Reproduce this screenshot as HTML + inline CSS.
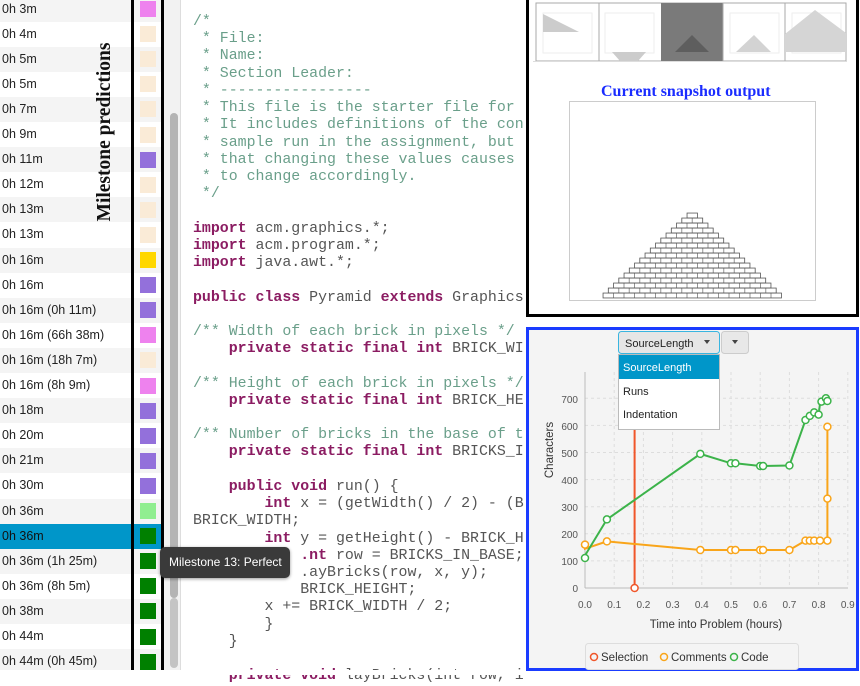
<!DOCTYPE html>
<html><head><meta charset="utf-8"><style>
*{margin:0;padding:0;box-sizing:border-box}
body{width:860px;height:675px;background:#fff;position:relative;overflow:hidden;font-family:"Liberation Sans",sans-serif}
.row{position:absolute;left:0;width:163px;height:25.1px;font-size:12.5px;color:#222;line-height:25px;padding-left:2px}
.sw{position:absolute;left:140px;width:16px;height:16px;top:4.5px}
.code{position:absolute;left:193px;top:14px;font-family:"Liberation Mono",monospace;font-size:14.9px;line-height:17.22px;color:#555;white-space:pre}
.c{color:#6a9f8a}.k{color:#8b1c62;font-weight:bold}
</style></head><body>
<div style="position:absolute;left:163px;top:0;width:17px;height:672px;background:#f2f2f2"></div>
<div style="position:absolute;left:170px;top:113px;width:8px;height:485px;background:#b4b4b4;border-radius:4px"></div>
<div style="position:absolute;left:170px;top:598px;width:8px;height:70px;background:#c4c4c4;border-radius:4px"></div>
<div style="position:absolute;left:180px;top:0;width:1px;height:672px;background:#ddd"></div>

<div id="list">
<div class="row" style="top:-3.5px;background:#f4f4f4">0h 3m<div class="sw" style="background:#ee82ee"></div></div>
<div class="row" style="top:21.6px">0h 4m<div class="sw" style="background:#faebd7"></div></div>
<div class="row" style="top:46.7px;background:#f4f4f4">0h 5m<div class="sw" style="background:#faebd7"></div></div>
<div class="row" style="top:71.8px">0h 5m<div class="sw" style="background:#faebd7"></div></div>
<div class="row" style="top:96.9px;background:#f4f4f4">0h 7m<div class="sw" style="background:#faebd7"></div></div>
<div class="row" style="top:122px">0h 9m<div class="sw" style="background:#faebd7"></div></div>
<div class="row" style="top:147.1px;background:#f4f4f4">0h 11m<div class="sw" style="background:#9370db"></div></div>
<div class="row" style="top:172.2px">0h 12m<div class="sw" style="background:#faebd7"></div></div>
<div class="row" style="top:197.3px;background:#f4f4f4">0h 13m<div class="sw" style="background:#faebd7"></div></div>
<div class="row" style="top:222.4px">0h 13m<div class="sw" style="background:#faebd7"></div></div>
<div class="row" style="top:247.5px;background:#f4f4f4">0h 16m<div class="sw" style="background:#ffd700"></div></div>
<div class="row" style="top:272.6px">0h 16m<div class="sw" style="background:#9370db"></div></div>
<div class="row" style="top:297.7px;background:#f4f4f4">0h 16m (0h 11m)<div class="sw" style="background:#9370db"></div></div>
<div class="row" style="top:322.8px">0h 16m (66h 38m)<div class="sw" style="background:#ee82ee"></div></div>
<div class="row" style="top:347.9px;background:#f4f4f4">0h 16m (18h 7m)<div class="sw" style="background:#faebd7"></div></div>
<div class="row" style="top:373px">0h 16m (8h 9m)<div class="sw" style="background:#ee82ee"></div></div>
<div class="row" style="top:398.1px;background:#f4f4f4">0h 18m<div class="sw" style="background:#9370db"></div></div>
<div class="row" style="top:423.2px">0h 20m<div class="sw" style="background:#9370db"></div></div>
<div class="row" style="top:448.3px;background:#f4f4f4">0h 21m<div class="sw" style="background:#9370db"></div></div>
<div class="row" style="top:473.4px">0h 30m<div class="sw" style="background:#9370db"></div></div>
<div class="row" style="top:498.5px;background:#f4f4f4">0h 36m<div class="sw" style="background:#90ee90"></div></div>
<div class="row" style="top:523.6px;background:#0096c9;color:#111">0h 36m<div class="sw" style="background:#008000"></div></div>
<div class="row" style="top:548.7px;background:#f4f4f4">0h 36m (1h 25m)<div class="sw" style="background:#008000"></div></div>
<div class="row" style="top:573.8px">0h 36m (8h 5m)<div class="sw" style="background:#008000"></div></div>
<div class="row" style="top:598.9px;background:#f4f4f4">0h 38m<div class="sw" style="background:#008000"></div></div>
<div class="row" style="top:624px">0h 44m<div class="sw" style="background:#008000"></div></div>
<div class="row" style="top:649.1px;background:#f4f4f4">0h 44m (0h 45m)<div class="sw" style="background:#008000"></div></div>
</div>
<div style="position:absolute;left:131px;top:-4px;width:33px;height:677px;border:3px solid #000"></div>
<div style="position:absolute;left:105px;top:132px;transform:translate(-50%,-50%) rotate(-90deg);font-family:'Liberation Serif',serif;font-weight:bold;font-size:19.5px;white-space:nowrap;color:#111">Milestone predictions</div>

<div class="code"><span class="c">/*
 * File:
 * Name:
 * Section Leader: 
 * -----------------
 * This file is the starter file for
 * It includes definitions of the con
 * sample run in the assignment, but
 * that changing these values causes
 * to change accordingly.
 */</span>

<span class="k">import</span> acm.graphics.*;
<span class="k">import</span> acm.program.*;
<span class="k">import</span> java.awt.*;

<span class="k">public class</span> Pyramid <span class="k">extends</span> Graphics

<span class="c">/** Width of each brick in pixels */</span>
    <span class="k">private static final int</span> BRICK_WI

<span class="c">/** Height of each brick in pixels */</span>
    <span class="k">private static final int</span> BRICK_HE

<span class="c">/** Number of bricks in the base of t</span>
    <span class="k">private static final int</span> BRICKS_I

    <span class="k">public void</span> run() {
        <span class="k">int</span> x = (getWidth() / 2) - (B
BRICK_WIDTH;
        <span class="k">int</span> y = getHeight() - BRICK_H
            <span class="k">.nt</span> row = BRICKS_IN_BASE;
            .ayBricks(row, x, y);
            BRICK_HEIGHT;
        x += BRICK_WIDTH / 2;
        }
    }

    <span class="k">private void</span> layBricks(int row, i</div>

<div style="position:absolute;left:160px;top:547px;width:130px;height:31px;background:#3a3a3a;border-radius:5px;color:#fff;font-size:12px;line-height:31px;padding-left:9px;box-shadow:0 1px 3px rgba(0,0,0,.4)">Milestone 13: Perfect</div>

<!-- top right -->
<div style="position:absolute;left:526px;top:-3px;width:333px;height:320px;border:3px solid #000;background:#fff"></div>
<div style="position:absolute;left:601px;top:92px;transform:translateY(-50%);font-family:'Liberation Serif',serif;font-weight:bold;font-size:16px;color:#1a2cff">Current snapshot output</div>
<div style="position:absolute;left:0;top:670px;width:860px;height:5px;background:#fff"></div>
<svg style="position:absolute;left:0;top:0" width="860" height="675">
<defs>
<pattern id="A" x="603" y="3" width="10.5" height="5" patternUnits="userSpaceOnUse"><rect x="0" y="0" width="10.5" height="5" fill="#fff" stroke="#666" stroke-width="0.7"/></pattern>
<pattern id="B" x="608.25" y="3" width="10.5" height="5" patternUnits="userSpaceOnUse"><rect x="0" y="0" width="10.5" height="5" fill="#fff" stroke="#666" stroke-width="0.7"/></pattern>
</defs>
<rect x="536" y="3" width="310" height="58" fill="#fff" stroke="#aaa"/>
<rect x="661" y="3" width="62" height="58" fill="#7a7a7a"/>
<g stroke="#aaa"><line x1="599" y1="3" x2="599" y2="61"/><line x1="723" y1="3" x2="723" y2="61"/><line x1="785" y1="3" x2="785" y2="61"/></g>
<g fill="none" stroke="#eee"><rect x="543" y="13" width="49" height="40"/><rect x="605" y="13" width="49" height="40"/><rect x="730" y="13" width="49" height="40"/><rect x="792" y="13" width="49" height="40"/></g>
<polygon points="543,14 579,32 543,32" fill="#ccc"/>
<polygon points="612,52 646,52 638,61 620,61" fill="#ccc"/>
<polygon points="675,52 709,52 692,35" fill="#5e5e5e"/>
<polygon points="736,52 771,52 754,35" fill="#d3d3d3"/>
<polygon points="785,52 846,52 846,33 815,10 785,34" fill="#d5d5d5"/>
<rect x="533" y="61" width="314" height="1" fill="#ddd"/>
<rect x="569.5" y="101.5" width="246" height="199" fill="#fff" stroke="#ccc"/>
<g stroke="#555" stroke-width="0.7">
<rect x="603" y="293" width="178.5" height="5" fill="url(#A)"/>
<rect x="608.25" y="288" width="168" height="5" fill="url(#B)"/>
<rect x="613.5" y="283" width="157.5" height="5" fill="url(#A)"/>
<rect x="618.75" y="278" width="147" height="5" fill="url(#B)"/>
<rect x="624" y="273" width="136.5" height="5" fill="url(#A)"/>
<rect x="629.25" y="268" width="126" height="5" fill="url(#B)"/>
<rect x="634.5" y="263" width="115.5" height="5" fill="url(#A)"/>
<rect x="639.75" y="258" width="105" height="5" fill="url(#B)"/>
<rect x="645" y="253" width="94.5" height="5" fill="url(#A)"/>
<rect x="650.25" y="248" width="84" height="5" fill="url(#B)"/>
<rect x="655.5" y="243" width="73.5" height="5" fill="url(#A)"/>
<rect x="660.75" y="238" width="63" height="5" fill="url(#B)"/>
<rect x="666" y="233" width="52.5" height="5" fill="url(#A)"/>
<rect x="671.25" y="228" width="42" height="5" fill="url(#B)"/>
<rect x="676.5" y="223" width="31.5" height="5" fill="url(#A)"/>
<rect x="681.75" y="218" width="21" height="5" fill="url(#B)"/>
<rect x="687" y="213" width="10.5" height="5" fill="url(#A)"/>
</g>

<rect x="527.5" y="328.5" width="330" height="341" fill="#f4f4f4" stroke="#1a3cff" stroke-width="3"/>
<g stroke="#ddd" stroke-dasharray="3,3">
<line x1="585" y1="560.9" x2="848" y2="560.9"/><line x1="585" y1="533.8" x2="848" y2="533.8"/><line x1="585" y1="506.7" x2="848" y2="506.7"/><line x1="585" y1="479.6" x2="848" y2="479.6"/><line x1="585" y1="452.5" x2="848" y2="452.5"/><line x1="585" y1="425.4" x2="848" y2="425.4"/><line x1="585" y1="398.3" x2="848" y2="398.3"/>
<line x1="614.2" y1="372" x2="614.2" y2="588"/><line x1="643.4" y1="372" x2="643.4" y2="588"/><line x1="672.6" y1="372" x2="672.6" y2="588"/><line x1="701.8" y1="372" x2="701.8" y2="588"/><line x1="731" y1="372" x2="731" y2="588"/><line x1="760.2" y1="372" x2="760.2" y2="588"/><line x1="789.4" y1="372" x2="789.4" y2="588"/><line x1="818.6" y1="372" x2="818.6" y2="588"/><line x1="847.8" y1="372" x2="847.8" y2="588"/>
</g>
<g stroke="#bbb"><line x1="585" y1="372" x2="585" y2="588"/><line x1="585" y1="588" x2="848" y2="588"/></g>
<g fill="#555" font-size="10" font-family="Liberation Sans" text-anchor="end">
<text x="578" y="592">0</text><text x="578" y="565">100</text><text x="578" y="538">200</text><text x="578" y="511">300</text><text x="578" y="484">400</text><text x="578" y="457">500</text><text x="578" y="430">600</text><text x="578" y="403">700</text>
</g>
<g fill="#555" font-size="10" font-family="Liberation Sans" text-anchor="middle">
<text x="585" y="608">0.0</text><text x="614.2" y="608">0.1</text><text x="643.4" y="608">0.2</text><text x="672.6" y="608">0.3</text><text x="701.8" y="608">0.4</text><text x="731" y="608">0.5</text><text x="760.2" y="608">0.6</text><text x="789.4" y="608">0.7</text><text x="818.6" y="608">0.8</text><text x="847.8" y="608">0.9</text>
</g>
<text x="716" y="628" fill="#333" font-size="11.5" font-family="Liberation Sans" text-anchor="middle">Time into Problem (hours)</text>
<text transform="translate(553,450) rotate(-90)" fill="#333" font-size="11.5" font-family="Liberation Sans" text-anchor="middle">Characters</text>
<line x1="634.6" y1="588" x2="634.6" y2="360" stroke="#f0562a" stroke-width="2"/>
<circle cx="634.6" cy="588" r="3.5" fill="#fff" stroke="#f0562a" stroke-width="1.5"/>
<polyline fill="none" stroke="#f9a51a" stroke-width="2" points="585,544.6 585,548.7 606.9,541.4 700.3,550 731,550 735.4,550 760.2,550 763.1,550 789.4,550 805.5,540.6 809.8,540.6 814.2,540.6 820,540.6 827.4,540.6 827.4,498.6 827.4,426.8"/>
<g fill="#fff" stroke="#f9a51a" stroke-width="1.5"><circle cx="585" cy="544.6" r="3.5"/><circle cx="606.9" cy="541.4" r="3.5"/><circle cx="700.3" cy="550" r="3.5"/><circle cx="731" cy="550" r="3.5"/><circle cx="735.4" cy="550" r="3.5"/><circle cx="760.2" cy="550" r="3.5"/><circle cx="763.1" cy="550" r="3.5"/><circle cx="789.4" cy="550" r="3.5"/><circle cx="805.5" cy="540.6" r="3.5"/><circle cx="809.8" cy="540.6" r="3.5"/><circle cx="814.2" cy="540.6" r="3.5"/><circle cx="820" cy="540.6" r="3.5"/><circle cx="827.4" cy="540.6" r="3.5"/><circle cx="827.4" cy="498.6" r="3.5"/><circle cx="827.4" cy="426.8" r="3.5"/></g>
<polyline fill="none" stroke="#3cb34a" stroke-width="2" points="585,561 585,555.5 606.9,519.4 700.3,453.9 731,463.3 735.4,463.3 760.2,466 763.1,466 789.4,465.5 805.5,420 809.8,415.9 814.2,412.4 818.6,414.6 820,403.7 821.5,401.6 825.9,398.3 827.4,397 827.4,401"/>
<g fill="#fff" stroke="#3cb34a" stroke-width="1.5"><circle cx="585" cy="558" r="3.5"/><circle cx="606.9" cy="519.4" r="3.5"/><circle cx="700.3" cy="453.9" r="3.5"/><circle cx="731" cy="463.3" r="3.5"/><circle cx="735.4" cy="463.3" r="3.5"/><circle cx="760.2" cy="466" r="3.5"/><circle cx="763.1" cy="466" r="3.5"/><circle cx="789.4" cy="465.5" r="3.5"/><circle cx="805.5" cy="420" r="3.5"/><circle cx="809.8" cy="415.9" r="3.5"/><circle cx="814.2" cy="412.4" r="3.5"/><circle cx="818.6" cy="414.6" r="3.5"/><circle cx="821.5" cy="401.6" r="3.5"/><circle cx="825.9" cy="398.3" r="3.5"/><circle cx="827.4" cy="401" r="3.5"/></g>
<rect x="585.5" y="643.5" width="213" height="26" fill="#f4f4f4" stroke="#ddd" rx="3"/>
<g font-size="11.5" font-family="Liberation Sans" fill="#333">
<circle cx="594" cy="657" r="3.5" fill="none" stroke="#f0562a" stroke-width="1.5"/><text x="601" y="661">Selection</text>
<circle cx="664" cy="657" r="3.5" fill="none" stroke="#f9a51a" stroke-width="1.5"/><text x="671" y="661">Comments</text>
<circle cx="734" cy="657" r="3.5" fill="none" stroke="#3cb34a" stroke-width="1.5"/><text x="741" y="661">Code</text>
</g>
<rect x="721.5" y="331.5" width="27" height="22" fill="#e8e8e8" stroke="#ccc" rx="3"/>
<polygon points="732,340 738,340 735,344" fill="#444"/>
<rect x="618.5" y="331.5" width="101" height="22" fill="#e6e6e6" stroke="#39b5e0" rx="3"/>
<text x="625" y="347" font-size="11" font-family="Liberation Sans" fill="#222">SourceLength</text>
<polygon points="704,340 710,340 707,344" fill="#444"/>
<rect x="618.5" y="354.5" width="101" height="75" fill="#fff" stroke="#bbb"/>
<rect x="619" y="355" width="100" height="24" fill="#0096c9"/>
<g font-size="11" font-family="Liberation Sans"><text x="623" y="371" fill="#fff">SourceLength</text><text x="623" y="395" fill="#222">Runs</text><text x="623" y="418" fill="#222">Indentation</text></g>
</svg>
</body></html>
